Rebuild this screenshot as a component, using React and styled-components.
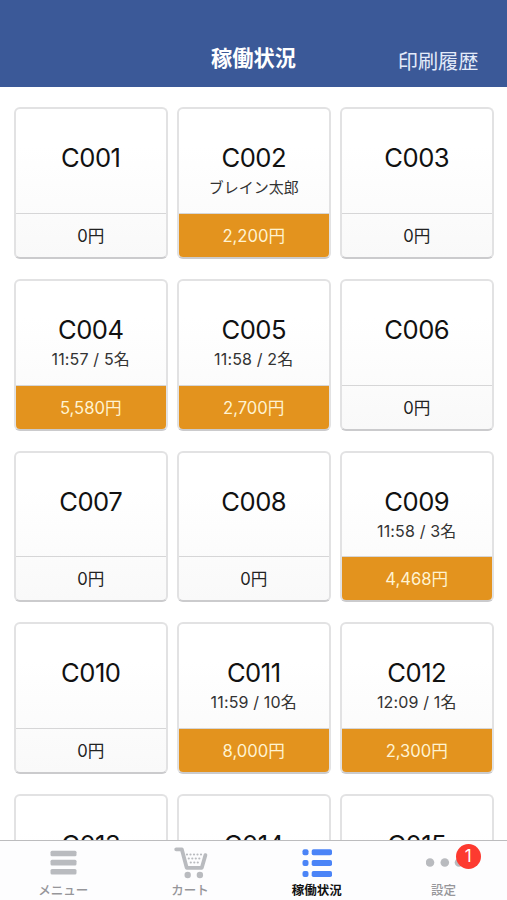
import React from 'react';
import styled, { createGlobalStyle } from 'styled-components';

const GlobalStyle = createGlobalStyle`
  * {
    box-sizing: border-box;
  }
  body {
    margin: 0;
    background: #fff;
    font-family: Inter, 'Noto Sans CJK JP', sans-serif;
  }
`;

const Screen = styled.div`
  display: flex;
  flex-direction: column;
  height: 900px;
  overflow: hidden;
`;

const Header = styled.header`
  display: grid;
  grid-template-columns: 1fr auto 1fr;
  align-items: end;
  flex: none;
  height: 87px;
  padding: 0 28.5px 13px;
  background: #3b5998;
  color: #fff;
`;

const Title = styled.h1`
  grid-column: 2;
  margin: 0 0 3px;
  font-size: 21.2px;
  line-height: 26px;
  font-weight: 700;
`;

const HistoryButton = styled.button`
  justify-self: end;
  padding: 0;
  border: none;
  background: none;
  color: #e3ebfa;
  font-family: inherit;
  font-size: 20.2px;
  line-height: 24px;
`;

const TableList = styled.main`
  display: grid;
  grid-template-columns: repeat(3, 1fr);
  grid-auto-rows: 151.5px;
  gap: 20.2px 9.5px;
  flex: 1;
  min-height: 0;
  padding: 20.4px 13.5px 0 14px;
  overflow: hidden;
`;

const Card = styled.div`
  display: flex;
  flex-direction: column;
  overflow: hidden;
  border: 2px solid #e2e2e3;
  border-bottom-color: #cbcbcd;
  border-radius: 6px;
  background: linear-gradient(#fff 25%, #f9f9f9);
`;

const CardBody = styled.div`
  display: flex;
  flex-direction: column;
  align-items: center;
  flex: 1;
  padding-top: 33px;
`;

const TableName = styled.div`
  font-size: 25.6px;
  letter-spacing: -0.5px;
  line-height: 32px;
  color: #111;
`;

const Guest = styled.div`
  margin-top: ${(props) => (props.$visit ? '1px' : '2px')};
  font-size: ${(props) => (props.$visit ? '16px' : '15px')};
  letter-spacing: ${(props) => (props.$visit ? '0.15px' : '0')};
  line-height: 24px;
  color: #333;
`;

const Price = styled.div`
  height: 44px;
  border-top: 1px solid #d6d6d7;
  background: ${(props) => (props.$active ? '#e3931e' : 'transparent')};
  color: ${(props) => (props.$active ? '#fff3d2' : '#222')};
  font-size: 16.6px;
  line-height: 45px;
  text-align: center;
`;

const TabBar = styled.nav`
  display: flex;
  flex: none;
  height: 60px;
  border-top: 1px solid #bcbcbe;
  background: #fdfdfe;
`;

const Tab = styled.div`
  display: flex;
  flex-direction: column;
  align-items: center;
  flex: 1;
  padding-top: 4px;
  color: ${(props) => (props.$active ? '#111' : '#96969a')};
  font-size: 12.5px;
  font-weight: ${(props) => (props.$active ? 700 : 500)};
  line-height: 20px;
`;

const IconBox = styled.div`
  position: relative;
  width: 36px;
  height: 36px;
`;

const Badge = styled.span`
  position: absolute;
  top: -1px;
  left: 30px;
  width: 25px;
  height: 25px;
  border-radius: 50%;
  background: #fd3a30;
  color: #fff;
  font-size: 17px;
  font-weight: 400;
  line-height: 25px;
  text-align: center;
`;

const MenuIcon = () => (
  <svg width="36" height="36" viewBox="0 0 36 36" fill="#b9bbbf">
    <rect x="5.5" y="5.7" width="26" height="5.6" rx="1.5" />
    <rect x="5.5" y="14.8" width="26" height="5.6" rx="1.5" />
    <rect x="5.5" y="24" width="26" height="5.6" rx="1.5" />
  </svg>
);

const CartIcon = () => (
  <svg width="36" height="36" viewBox="0 0 36 36" fill="none" stroke="#b9bbbf">
    <path
      d="M4.2 4.3H9.8L14.7 22.8H29.8L33.4 10.2"
      strokeWidth="3.8"
      strokeLinecap="round"
      strokeLinejoin="round"
    />
    <path
      d="M15 9.5H30M16.8 13.5H29M18.8 17.5H27"
      strokeWidth="2.2"
      strokeLinecap="round"
      strokeDasharray="0 3.5"
    />
    <circle cx="15.7" cy="30" r="3.2" fill="#b9bbbf" stroke="none" />
    <circle cx="27.9" cy="30" r="3.2" fill="#b9bbbf" stroke="none" />
  </svg>
);

const ListIcon = () => (
  <svg width="36" height="36" viewBox="0 0 36 36" fill="#4b84f7">
    {[4.3, 15, 26].map((y) => (
      <g key={y}>
        <rect x="3.5" y={y} width="6" height="6" rx="2" />
        <rect x="12.7" y={y} width="20.3" height="6" rx="1.8" />
      </g>
    ))}
  </svg>
);

const MoreIcon = () => (
  <svg width="36" height="36" viewBox="0 0 36 36" fill="#b9bbbf">
    <circle cx="4" cy="17.5" r="4.3" />
    <circle cx="18.8" cy="17.5" r="4.3" />
    <circle cx="33" cy="17.5" r="4.3" />
  </svg>
);

const tables = [
  { name: 'C001', price: '0' },
  { name: 'C002', guest: 'ブレイン太郎', price: '2,200' },
  { name: 'C003', price: '0' },
  { name: 'C004', visit: '11:57 / 5名', price: '5,580' },
  { name: 'C005', visit: '11:58 / 2名', price: '2,700' },
  { name: 'C006', price: '0' },
  { name: 'C007', price: '0' },
  { name: 'C008', price: '0' },
  { name: 'C009', visit: '11:58 / 3名', price: '4,468' },
  { name: 'C010', price: '0' },
  { name: 'C011', visit: '11:59 / 10名', price: '8,000' },
  { name: 'C012', visit: '12:09 / 1名', price: '2,300' },
  { name: 'C013' },
  { name: 'C014' },
  { name: 'C015' },
];

const tabs = [
  { label: 'メニュー', Icon: MenuIcon },
  { label: 'カート', Icon: CartIcon },
  { label: '稼働状況', Icon: ListIcon, active: true },
  { label: '設定', Icon: MoreIcon, badge: 1 },
];

const App = () => {
  return (
    <Screen>
      <GlobalStyle />
      <Header>
        <Title>稼働状況</Title>
        <HistoryButton>印刷履歴</HistoryButton>
      </Header>

      <TableList>
        {tables.map((table) => (
          <Card key={table.name}>
            <CardBody>
              <TableName>{table.name}</TableName>
              {table.guest && <Guest>{table.guest}</Guest>}
              {table.visit && <Guest $visit>{table.visit}</Guest>}
            </CardBody>
            {table.price && <Price $active={table.price !== '0'}>{table.price}円</Price>}
          </Card>
        ))}
      </TableList>

      <TabBar>
        {tabs.map(({ label, Icon, active, badge }) => (
          <Tab key={label} $active={active}>
            <IconBox>
              <Icon />
              {badge && <Badge>{badge}</Badge>}
            </IconBox>
            {label}
          </Tab>
        ))}
      </TabBar>
    </Screen>
  );
};

export default App;
